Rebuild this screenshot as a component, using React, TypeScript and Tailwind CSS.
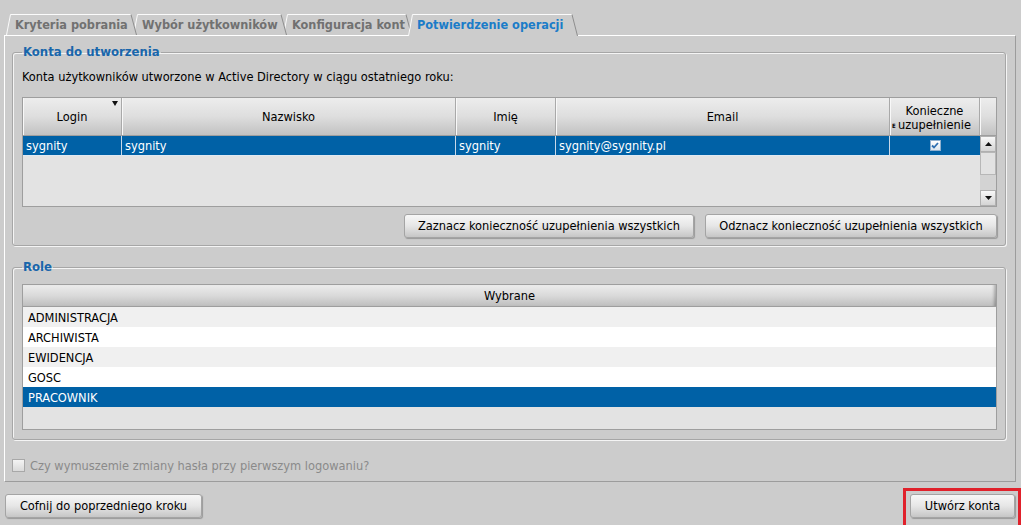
import { useState } from "react";

const font = "font-['DejaVu_Sans_Condensed','DejaVu_Sans',sans-serif]";

const Tab = ({ label, w, active = false }: { label: string; w: number; active?: boolean }) => {
  const h = active ? 22 : 21;
  return (
    <div className="relative shrink-0" style={{ width: w, height: h }}>
      <svg className="absolute left-0 top-0" width={w} height={h}>
        <path d={`M0.5,${h} L4.5,0.5 L${w - 6},0.5 L${w - 0.5},${h} Z`} fill="#cccccc" stroke="none" />
        <path d={`M0.5,${h} L4.5,0.5 L${w - 6},0.5`} fill="none" stroke="#fbfbfb" />
        <path d={`M${w - 6},0.5 L${w - 0.5},${h}`} fill="none" stroke="#8e8e8e" />
      </svg>
      <span
        className={`relative block pl-[9px] pt-[2px] text-[12.6px] font-bold leading-[17px] ${
          active ? "text-[#1b7cc8]" : "text-[#717171]"
        }`}
      >
        {label}
      </span>
    </div>
  );
};

const Button = ({ label, w }: { label: string; w: number }) => (
  <button
    className="h-[24px] shrink-0 rounded-[3px] border border-[#a4a4a4] bg-gradient-to-b from-[#f7f7f7] via-[#e6e6e6] to-[#c6c6c6] text-[12.7px] text-black shadow-[1px_1px_1px_rgba(0,0,0,0.25)]"
    style={{ width: w }}
  >
    {label}
  </button>
);

const headCls =
  "flex items-center justify-center border-r border-[#a9a9a9] shadow-[inset_1px_0_0_#f8f8f8] text-black";

const Arrow = ({ up }: { up: boolean }) => (
  <div className="flex h-[16px] w-[16px] items-center justify-center border border-[#b0b0b0] bg-gradient-to-b from-[#f8f8f8] to-[#d4d4d4]">
    <svg width="7" height="4" viewBox="0 0 7 4">
      <path d={up ? "M0,4 L3.5,0 L7,4 Z" : "M0,0 L3.5,4 L7,0 Z"} fill="#111" />
    </svg>
  </div>
);

const roles = ["ADMINISTRACJA", "ARCHIWISTA", "EWIDENCJA", "GOSC", "PRACOWNIK"];

export default function App() {
  const [forceChange, setForceChange] = useState(false);

  return (
    <div className={`h-[525px] w-[1021px] overflow-hidden bg-[#cccccc] text-[12.7px] text-black ${font}`}>
      {/* tabs */}
      <div className="flex h-[35px] items-end pl-[6px]">
        <div className="relative z-[3]">
          <Tab label="Kryteria pobrania" w={131} />
        </div>
        <div className="relative z-[2] -ml-[4px]">
          <Tab label="Wybór użytkowników" w={154} />
        </div>
        <div className="relative z-[1] -ml-[4px]">
          <Tab label="Konfiguracja kont" w={129} />
        </div>
        <div className="relative z-10 -mb-[1px] -ml-[4px]">
          <Tab label="Potwierdzenie operacji" w={170} active />
        </div>
      </div>

      {/* panel */}
      <div className="ml-[4px] h-[447px] w-[1012px] border border-b-[#9c9c9c] border-l-white border-r-[#9c9c9c] border-t-white px-[7px] pt-[8px]">
        <fieldset className="w-[994px] rounded-[3px] border border-[#a6a6a6] pb-[7px] pl-[9px] pr-[8px] shadow-[inset_1px_1px_0_#f4f4f4,1px_1px_0_#f4f4f4]">
          <legend className="px-[1px] text-[13px] font-bold leading-[16px] text-[#1966ab]">Konta do utworzenia</legend>
          <div className="mt-[9px] h-[16px] leading-[16px]">
            Konta użytkowników utworzone w Active Directory w ciągu ostatniego roku:
          </div>

          <div className="mt-[12px] w-[975px] border border-[#9e9e9e] bg-[#e3e3e3]">
            <div className="flex h-[38px] border-b border-[#9e9e9e] bg-gradient-to-b from-[#ededed] via-[#dedede] to-[#c2c2c2]">
              <div className={`${headCls} relative w-[99px]`}>
                Login
                <svg className="absolute right-[3px] top-[3px]" width="6" height="5" viewBox="0 0 6 5">
                  <path d="M0,0 L6,0 L3,5 Z" fill="#111" />
                </svg>
              </div>
              <div className={`${headCls} w-[334px]`}>Nazwisko</div>
              <div className={`${headCls} w-[100px]`}>Imię</div>
              <div className={`${headCls} w-[334px]`}>Email</div>
              <div className={`${headCls} relative w-[90px] flex-col pt-[2px] leading-[14px]`}>
                <span>Konieczne</span>
                <span>uzupełnienie</span>
                <span className="absolute bottom-[6px] left-[2px] text-[6px] font-bold leading-[6px]">E</span>
              </div>
              <div className="w-[16px] shadow-[inset_1px_0_0_#f8f8f8]" />
            </div>
            <div className="flex h-[70px]">
              <div className="w-[957px]">
                <div className="flex h-[20px] border-b border-[#dfe9f3] bg-[#0061a6] text-white">
                  <div className="w-[99px] border-r border-[#c8d8e8] pl-[3px] leading-[20px]">sygnity</div>
                  <div className="w-[334px] border-r border-[#c8d8e8] pl-[3px] leading-[20px]">sygnity</div>
                  <div className="w-[100px] border-r border-[#c8d8e8] pl-[3px] leading-[20px]">sygnity</div>
                  <div className="w-[334px] border-r border-[#c8d8e8] pl-[3px] leading-[20px]">sygnity@sygnity.pl</div>
                  <div className="flex w-[90px] items-center justify-center">
                    <div className="flex h-[11px] w-[11px] items-center justify-center border border-[#8fb0cf] bg-gradient-to-b from-[#ffffff] to-[#dde6ee]">
                      <svg width="8" height="7" viewBox="0 0 8 7">
                        <path d="M1,3.5 L3,5.5 L7,1" fill="none" stroke="#2f6fb0" strokeWidth="1.8" />
                      </svg>
                    </div>
                  </div>
                </div>
              </div>
              <div className="flex w-[16px] flex-col bg-[#d3d3d3]">
                <Arrow up />
                <div className="h-[23px] border border-[#b7b7b7] bg-[#e2e2e2] bg-[radial-gradient(#a3a3a3_0.6px,transparent_0.7px)] bg-[length:2px_2px]" />
                <div className="flex-1" />
                <Arrow up={false} />
              </div>
            </div>
          </div>

          <div className="mt-[7px] flex justify-end gap-[11px]">
            <Button label="Zaznacz konieczność uzupełnienia wszystkich" w={290} />
            <Button label="Odznacz konieczność uzupełnienia wszystkich" w={292} />
          </div>
        </fieldset>

        <fieldset className="mt-[13px] w-[994px] rounded-[3px] border border-[#a6a6a6] pb-[9px] pl-[9px] pr-[8px] shadow-[inset_1px_1px_0_#f4f4f4,1px_1px_0_#f4f4f4]">
          <legend className="px-[1px] text-[13px] font-bold leading-[16px] text-[#1966ab]">Role</legend>
          <div className="mt-[9px] w-[975px] border border-[#9e9e9e] bg-[#e3e3e3]">
            <div className="flex h-[22px] items-center justify-center border-b border-[#9e9e9e] bg-gradient-to-b from-[#ececec] via-[#dadada] to-[#bfbfbf] shadow-[inset_-4px_0_3px_-2px_rgba(0,0,0,0.25)]">
              Wybrane
            </div>
            {roles.map((r, i) => (
              <div
                key={r}
                className={`h-[20px] pl-[5px] pt-[1px] leading-[20px] ${
                  r === "PRACOWNIK" ? "bg-[#0061a6] text-white" : i % 2 === 0 ? "bg-[#f0f0f0]" : "bg-white"
                }`}
              >
                {r}
              </div>
            ))}
            <div className="h-[22px]" />
          </div>
        </fieldset>

        <label className="mt-[16px] flex items-center gap-[5px] text-[#8a8a8a]">
          <span
            className="h-[13px] w-[13px] border border-[#a8a8a8] bg-gradient-to-b from-[#f4f4f4] to-[#dadada]"
            onClick={() => setForceChange(!forceChange)}
          />
          Czy wymuszemie zmiany hasła przy pierwszym logowaniu?
        </label>
      </div>

      {/* bottom buttons */}
      <div className="flex items-start">
        <div className="ml-[5px] mt-[12px]">
          <Button label="Cofnij do poprzedniego kroku" w={197} />
        </div>
        <div className="ml-auto mt-[6px] h-[40px] w-[118px] border-[3px] border-[#e0212b] pl-[4px] pt-[3px]">
          <Button label="Utwórz konta" w={105} />
        </div>
      </div>
    </div>
  );
}
